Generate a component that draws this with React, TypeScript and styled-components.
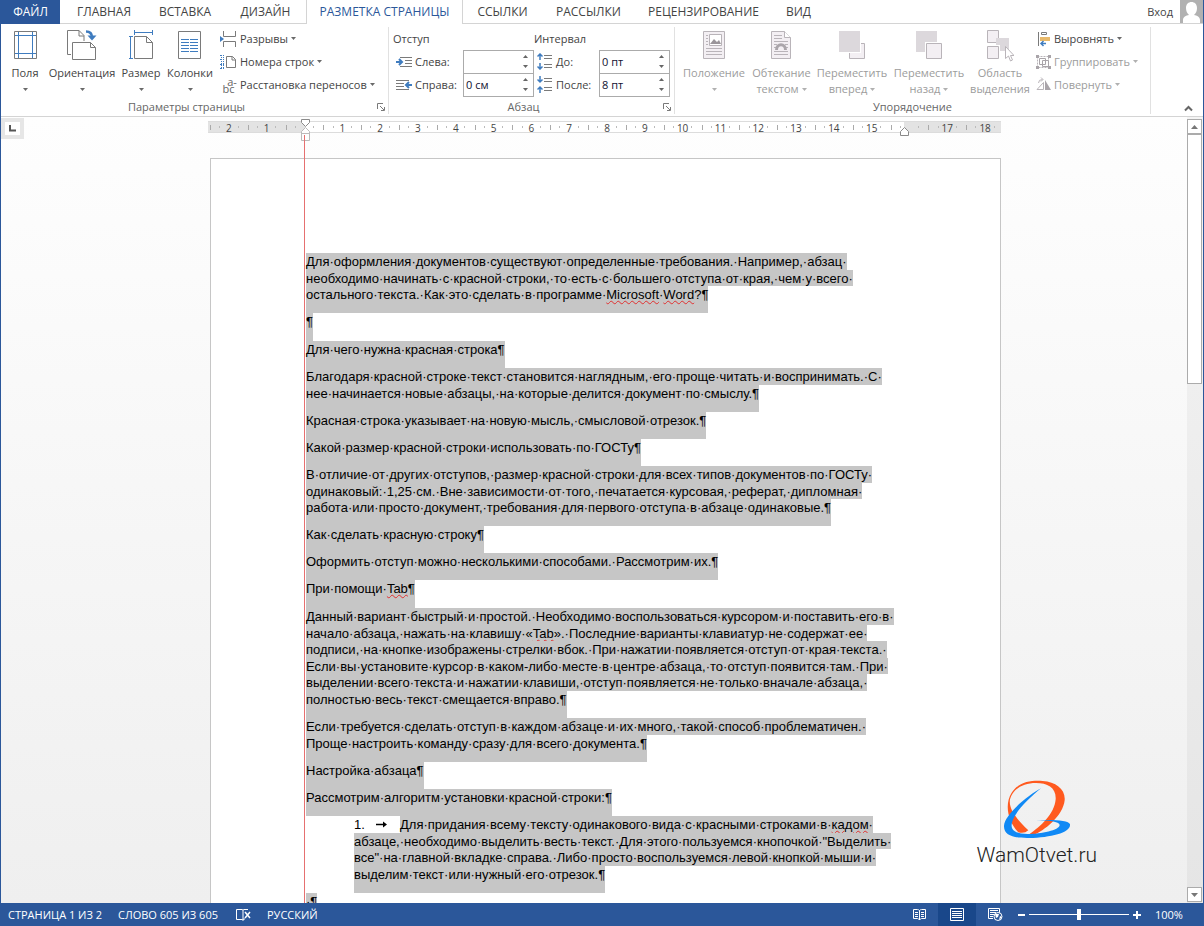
import React, { Fragment, ReactNode } from "react";
import styled, { createGlobalStyle, css } from "styled-components";

const BLUE = "#2b579a";
const UI_FONT = '"Open Sans", "Noto Sans", sans-serif';

const GlobalStyle = createGlobalStyle`
  * { box-sizing: border-box; }
  body { margin: 0; font: 12px/16px ${UI_FONT}; color: #444; background: #fff; }
  button, input { font: inherit; color: inherit; }
  button { border: 0; padding: 0; background: none; }
  svg { display: block; }
`;

/* ---------- window frame ---------- */

const Window = styled.div`
  display: flex;
  flex-direction: column;
  height: 100vh;
  border: solid ${BLUE};
  border-width: 0 1px;
  overflow: hidden;
`;

/* ---------- tab strip ---------- */

const TabStrip = styled.nav`
  display: flex;
  flex: none;
  height: 24px;
  border-bottom: 1px solid #d4d4d4;
`;

const FileTab = styled.button`
  width: 59px;
  height: 24px;
  margin-right: 3px;
  background: ${BLUE};
  color: #fff;
`;

const Tab = styled.button<{ $width: number; $active?: boolean }>`
  width: ${(p) => p.$width}px;
  height: 24px;
  white-space: nowrap;
  ${(p) =>
    p.$active &&
    css`
      border: solid #d4d4d4;
      border-width: 0 1px;
      background: #fff;
      color: ${BLUE};
    `}
`;

const Account = styled.button`
  display: flex;
  gap: 7px;
  align-items: center;
  height: 23px;
  margin-left: auto;
  font-size: 11px;
`;

/* ---------- ribbon ---------- */

const Ribbon = styled.div`
  display: flex;
  flex: none;
  height: 93px;
  border-bottom: 1px solid #d4d4d4;
  font-size: 11px;
`;

const Group = styled.section<{ $width: number }>`
  display: flex;
  flex-direction: column;
  flex: none;
  width: ${(p) => p.$width}px;
  margin: 3px 0 2px;
  border-right: 1px solid #e1e1e1;
`;

const GroupBody = styled.div`
  display: flex;
  flex: 1;
  padding-left: 4px;
`;

const GroupFooter = styled.footer`
  display: flex;
  align-items: center;
  height: 14px;
  color: #666;
`;

const GroupTitle = styled.span`
  flex: 1;
  text-align: center;
`;

const BigButton = styled.button<{ $width: number }>`
  display: flex;
  flex-direction: column;
  align-items: center;
  width: ${(p) => p.$width}px;
  padding-top: 3px;
  white-space: nowrap;
  &:disabled { color: #9c9c9c; }
`;

const BigLabel = styled.span`
  display: flex;
  align-items: center;
  justify-content: center;
  gap: 3px;
  height: 16px;
`;

const IconBox = styled.span`
  display: block;
  height: 35px;
`;

const SmallColumn = styled.div<{ $indent: number }>`
  display: flex;
  flex-direction: column;
  margin-left: ${(p) => p.$indent}px;
`;

const SmallButton = styled.button`
  display: flex;
  align-items: center;
  gap: 3px;
  height: 23px;
  white-space: nowrap;
  &:disabled { color: #9c9c9c; }
`;

const Launcher = styled.button`
  display: grid;
  place-items: center;
  width: 14px;
  height: 12px;
  margin-left: 2px;
`;

const Collapse = styled.button`
  align-self: flex-end;
  margin: 0 10px 4px auto;
`;

const Spacing = styled.div`
  display: grid;
  grid-template-columns: 70px 71px 65px 71px;
  grid-template-rows: repeat(3, 23px);
  align-items: center;
`;

const Heading = styled.span`
  grid-column: span 2;
`;

const FieldLabel = styled.label`
  display: flex;
  align-items: center;
  gap: 3px;
  padding-left: 3px;
  white-space: nowrap;
`;

const Spin = styled.span`
  display: flex;
  height: 24px;
  border: 1px solid #ababab;
  background: #fff;
`;

const SpinInput = styled.input`
  flex: 1;
  min-width: 0;
  padding: 0 2px;
  border: 0;
  outline: 0;
  background: none;
  color: #101030;
`;

const SpinButtons = styled.span`
  display: grid;
  width: 16px;
  padding: 1px 0;
`;

const SpinButton = styled.button`
  display: grid;
  place-items: center;
`;

/* ---------- work area ---------- */

const WorkArea = styled.main`
  display: grid;
  grid-template-columns: 23px 1fr 16px;
  flex: 1;
  min-height: 0;
  background: linear-gradient(#fefefe, #efefef);
`;

const TabSelector = styled.button`
  display: grid;
  place-items: center;
  width: 23px;
  height: 21px;
  margin-top: 1px;
  border: 4px solid #e6e6e6;
  background: #fff;
`;

const Canvas = styled.div`
  position: relative;
  display: flex;
  flex-direction: column;
  align-items: center;
  overflow: hidden;
`;

const RulerWrap = styled.div`
  position: relative;
  flex: none;
  width: 795px;
  height: 41px;
  padding: 4px 2px 0 0;
`;

const RulerBar = styled.div`
  height: 12px;
  border: solid #dcdcdc;
  border-width: 1px 0;
  background: linear-gradient(90deg, #e3e3e3 97px, #fff 97px 696px, #e3e3e3 696px);
`;

const RulerScale = styled.div`
  display: grid;
  grid-template-columns: repeat(21, 1fr);
  margin: 0 -3px 0 2px;
`;

const RulerCell = styled.span`
  height: 10px;
  background:
    linear-gradient(#aaa, #aaa) 0 3px / 1px 5px no-repeat,
    linear-gradient(#bbb, #bbb) 25% 4px / 1px 2px no-repeat,
    linear-gradient(#bbb, #bbb) 75% 4px / 1px 2px no-repeat;
  font-size: 10px;
  line-height: 12px;
  text-align: center;
`;

const MarkerAnchor = styled.span<{ $left: number; $top: number }>`
  position: absolute;
  left: ${(p) => p.$left}px;
  top: ${(p) => p.$top}px;
`;

const Guide = styled.div`
  position: absolute;
  left: 96px;
  top: 18px;
  z-index: 1;
  width: 1px;
  height: 100vh;
  background: #e67070;
`;

const Paper = styled.article`
  flex: none;
  width: 791px;
  min-height: 1100px;
  padding: 94px 90px 0 95px;
  border: 1px solid #c6c6c6;
  background: #fff;
  color: #000;
  font: 13px/17px "Liberation Sans", Arial, sans-serif;
`;

const Line = styled.span`
  display: flex;
  height: 17px;
  white-space: nowrap;
  &:nth-child(even) { height: 16px; }
  &:last-child { height: 27px; }
`;

const Paragraph = styled.p<{ $indent?: number }>`
  margin: 0 0 0 ${(p) => p.$indent ?? 0}px;
  &:nth-child(8n + 2) ${Line}:last-child { height: 28px; }
`;

const Selected = styled.mark`
  background: #c6c6c6;
  color: inherit;
`;

const Misspelled = styled.span`
  text-decoration: underline wavy #e03030 1px;
  text-underline-offset: 1px;
`;

const Bullet = styled.span`
  display: flex;
  gap: 11px;
  width: 46px;
`;

const Watermark = styled.figure`
  position: absolute;
  right: 90px;
  bottom: 35px;
  display: flex;
  flex-direction: column;
  align-items: center;
  gap: 1px;
  margin: 0;
  color: #222;
  font: 300 21px/26px Roboto, sans-serif;
`;

const ScrollBar = styled.div`
  display: flex;
  flex-direction: column;
  padding: 2px 1px 1px 0;
  background: rgba(0, 0, 0, 0.04);
`;

const ScrollButton = styled.button`
  display: grid;
  place-items: center;
  width: 15px;
  height: 15px;
  border: 1px solid #ababab;
  background: #fff;
`;

const Thumb = styled.div`
  height: 250px;
  border: 1px solid #ababab;
  background: #fff;
`;

const Grow = styled.span`
  flex: 1;
`;

/* ---------- status bar ---------- */

const StatusBar = styled.footer`
  display: flex;
  flex: none;
  align-items: center;
  height: 23px;
  padding-left: 7px;
  background: ${BLUE};
  color: #fff;
  font-size: 11px;
  white-space: nowrap;
`;

const StatusItem = styled.button<{ $width: number }>`
  width: ${(p) => p.$width}px;
  text-align: left;
`;

const ViewButton = styled.button<{ $active?: boolean }>`
  display: grid;
  place-items: center;
  width: 38px;
  height: 23px;
  background: ${(p) => (p.$active ? "#19478a" : "none")};
`;

const ZoomStep = styled.button`
  display: grid;
  place-items: center;
  width: 14px;
  height: 23px;
`;

const ZoomSlider = styled.input`
  width: 100px;
  height: 12px;
  margin: 0 1px;
  appearance: none;
  background: linear-gradient(#fff, #fff) 0 5px / 100% 1px no-repeat;
  &::-webkit-slider-thumb {
    appearance: none;
    width: 4px;
    height: 11px;
    background: #fff;
  }
`;

const ZoomValue = styled.button`
  width: 59px;
  padding-left: 11px;
  text-align: left;
`;

/* ---------- icons ---------- */

const GREY = "#7a7a7a";
const INK = "#3f7cbf";
const PALE = "#f3eff3";
const DIM = "#b9b4b9";

const Svg = ({ w, h, children }: { w: number; h: number; children: ReactNode }) => (
  <svg width={w} height={h} viewBox={`0 0 ${w} ${h}`} fill="none" aria-hidden="true">
    {children}
  </svg>
);

const Caret = () => (
  <Svg w={5} h={3}><path d="M0 0h5L2.5 3z" fill="currentColor" opacity="0.8" /></Svg>
);

const MarginsIcon = () => (
  <Svg w={24} h={30}>
    <path d="M1.500 1.500h22v27h-22z" stroke={GREY} />
    <path d="M5.500 2v26M19.500 2v26M2 5.500h21M2 23.500h21" stroke={INK} />
  </Svg>
);

const OrientationIcon = () => (
  <Svg w={30} h={30}>
    <path d="M4 24.500H.5V.5h11.500l5 5V11M12 .5V6h5" stroke={GREY} />
    <path d="M5.500 12.500h18l5 5v12h-23zM23.500 12.500v5h5" stroke={GREY} fill="#fff" />
    <path d="M19 1.500q6 0 6 6" stroke={INK} strokeWidth="2.500" />
    <path d="M20.500 5.500L25 10.500 29.500 5.500z" fill={INK} />
  </Svg>
);

const SizeIcon = () => (
  <Svg w={26} h={30}>
    <path d="M6.500 6.500h12l6 6v16h-18zM18.500 6.500v6h6" stroke={GREY} />
    <path d="M6 2.500h18M6.500 0v5M24.500 0v5M2.500 6v22M1 6.500h4M1 28.500h4" stroke={INK} />
  </Svg>
);

const ColumnsIcon = () => (
  <Svg w={24} h={30}>
    <path d="M.5 1.500h22v27H.5z" stroke={GREY} />
    <path d="M3 9.500h8M3 12.500h8M3 15.500h8M3 18.500h8M3 21.500h8M12 9.500h8M12 12.500h8M12 15.500h8M12 18.500h8M12 21.500h8" stroke={INK} />
  </Svg>
);

const BreaksIcon = () => (
  <Svg w={17} h={16}>
    <path d="M3.500 0v5.500h12V0M3.500 16v-5.500h12V16" stroke={GREY} />
    <path d="M0 5l4 3-4 3z" fill={INK} />
  </Svg>
);

const LineNumbersIcon = () => (
  <Svg w={17} h={16}>
    <path d="M6.500 2.500h6l3 3v8h-9zM12 2.500V6h3.500" stroke={GREY} />
    <path d="M1.500 1v14M3.500 1v14" stroke={INK} strokeDasharray="1 1" />
    <path d="M0 1.500h4M0 5.500h4M0 10.500h4M0 14.500h4" stroke={INK} strokeDasharray="2 1" />
  </Svg>
);

const HyphenIcon = styled.span`
  display: flex;
  flex-direction: column;
  width: 17px;
  color: #666;
  font-size: 11px;
  line-height: 7px;
  &::before { content: "a-"; padding-left: 7px; }
  &::after { content: "bc"; }
`;

const IndentIcon = ({ right }: { right?: boolean }) => (
  <Svg w={16} h={12}>
    {right ? (
      <>
        <path d="M0 1.500h13M0 4.500h8M0 7.500h8M0 10.500h13" stroke={GREY} />
        <path d="M16 6h-5M13 3l-3 3 3 3" stroke={INK} strokeWidth="2" />
      </>
    ) : (
      <>
        <path d="M4 1.500h12M9 4.500h7M9 7.500h7M4 10.500h12" stroke={GREY} />
        <path d="M0 6h5M3 3l3 3-3 3" stroke={INK} strokeWidth="2" />
      </>
    )}
  </Svg>
);

const SpaceIcon = ({ after }: { after?: boolean }) => (
  <Svg w={16} h={17}>
    <path d="M7 2.500h8M7 5.500h8M7 11.500h8M7 14.500h8" stroke={GREY} />
    {after ? (
      <path d="M3 0v6M.5 3.500L3 6l2.500-2.500M3 17v-6M.5 13.500L3 11l2.500 2.500" stroke={INK} strokeWidth="1.500" />
    ) : (
      <path d="M3 7V1M.5 3.500L3 1l2.500 2.500M3 10v6M.5 13.500L3 16l2.500-2.500" stroke={INK} strokeWidth="1.500" />
    )}
  </Svg>
);

const PositionIcon = () => (
  <Svg w={24} h={30}>
    <path d="M1.500 1.500h21v27h-21z" stroke={DIM} fill={PALE} />
    <path d="M7.500 4.500h12v11h-12z" stroke={DIM} fill="#fff" />
    <path d="M8 14l4-5 3 3 2-2 2 4z" fill="#9a959a" />
    <path d="M4 5.500h2M4 8.500h2M4 11.500h2M4 14.500h2M4 18.500h16M4 21.500h16M4 24.500h16" stroke={DIM} />
  </Svg>
);

const WrapIcon = () => (
  <Svg w={24} h={30}>
    <path d="M1.500 1.500h13l6 6v21h-19z" stroke={DIM} fill={PALE} />
    <path d="M14.500 1.500v6h6" stroke={DIM} fill="#fff" />
    <path d="M4 5.500h8M4 8.500h8M4 11.500h14M4 14.500h3M15 14.500h3M4 17.500h2M16 17.500h2M4 21.500h14M4 24.500h14" stroke={DIM} />
    <path d="M6.500 20c0-7 9-7 9 0" stroke="#aaa5aa" strokeWidth="3" />
  </Svg>
);

const ForwardIcon = () => (
  <Svg w={28} h={30}>
    <path d="M11.500 13.500h15v15h-15z" stroke={DIM} fill={PALE} />
    <path d="M0 0h23v23H0z" fill="#fff" />
    <path d="M1 1h21v21H1z" fill="#dcd8dc" />
  </Svg>
);

const BackwardIcon = () => (
  <Svg w={28} h={30}>
    <path d="M1 1h21v21H1z" fill="#dcd8dc" />
    <path d="M10 12h17v17H10z" fill="#fff" />
    <path d="M11.500 13.500h15v15h-15z" stroke={DIM} fill={PALE} />
  </Svg>
);

const SelectionIcon = () => (
  <Svg w={28} h={32}>
    <path d="M1.500.5h11v12h-11zM1.500 16.500h11v12h-11z" stroke={DIM} fill={PALE} />
    <path d="M10 8h13v13H14v-6h-4z" fill="#dcd8dc" />
    <path d="M19.500 16.500v12l3-2.500 2 5 2-1-2-4.500h3.500z" stroke={DIM} fill="#fff" />
  </Svg>
);

const AlignIcon = () => (
  <Svg w={15} h={16}>
    <path d="M2.500 1v14" stroke={GREY} />
    <path d="M5.500 1.500h5v2h-5z" stroke={GREY} />
    <path d="M4 6h10v4H4z" fill="#e8b96a" />
    <path d="M10 12.500H5M7.500 10L5 12.500 7.500 15" stroke={INK} strokeWidth="1.500" />
  </Svg>
);

const GroupIcon = () => (
  <Svg w={15} h={16}>
    <path d="M1.500 2.500h11v11h-11z" stroke={DIM} strokeDasharray="2 1" />
    <path d="M3.500 4.500h6v6h-6zM6.500 6.500h6v6h-6z" stroke="#a9a4a9" />
    <path d="M0 1h3v3H0zM12 1h3v3h-3zM0 12h3v3H0zM12 12h3v3h-3z" fill="#a9a4a9" />
  </Svg>
);

const RotateIcon = () => (
  <Svg w={15} h={16}>
    <path d="M7.500 5.500v7H1z" stroke={DIM} />
    <path d="M9 3v10h6z" fill="#a9a4a9" />
    <path d="M2.500 6q0-3.500 4-3.500M5 .5l2 2-2 2" stroke={DIM} />
  </Svg>
);

const LauncherIcon = () => (
  <Svg w={8} h={8}>
    <path d="M.5 6V.5H6M3 3l4 4M7.500 4v3.500H4" stroke={GREY} />
  </Svg>
);

const AvatarIcon = () => (
  <Svg w={23} h={23}>
    <path d="M0 0h23v23H0z" fill="#b1b1b1" />
    <path d="M3 23v-3c0-3 3-4.500 6-5-2-2-3-4-3-7 0-4 2.500-6 5.500-6S17 4 17 8c0 3-1 5-3 7 3 .5 6 2 6 5v3z" fill="#fff" />
  </Svg>
);

const TabArrowIcon = () => (
  <Svg w={11} h={17}>
    <path d="M0 8.500h8" stroke="#000" strokeWidth="1.500" />
    <path d="M7 5.500l4 3-4 3z" fill="#000" />
  </Svg>
);

const ProofIcon = () => (
  <Svg w={15} h={13}>
    <path d="M7 12.500c0-1-1-1-1-1H.5v-10H6q1 0 1 1v10M7 2.500q0-1 1-1h4M7 12q0-1 1-1h1" stroke="#fff" />
    <path d="M9 4l5 6M14 4l-5 6" stroke="#fff" strokeWidth="1.500" />
  </Svg>
);

const ReadIcon = () => (
  <Svg w={15} h={13}>
    <path d="M7.500 2.500q-1-1-2-1h-4v9h4q1 0 2 1.500 1-1.500 2-1.500h4v-9h-4q-1 0-2 1V12M3 4.500h3M3 6.500h3M3 8.500h3M9 4.500h3M9 6.500h3M9 8.500h3" stroke="#fff" />
  </Svg>
);

const PrintViewIcon = () => (
  <Svg w={14} h={13}>
    <path d="M.5.5h13v12H.5zM2 3.500h10M2 5.500h10M2 7.500h10M2 9.500h10" stroke="#fff" />
  </Svg>
);

const WebViewIcon = () => (
  <Svg w={15} h={13}>
    <path d="M5 10.500H.5V.5h11V5M2 2.500h8M2 4.500h6M2 6.500h4M2 8.500h3" stroke="#fff" />
    <circle cx="10" cy="8.500" r="4" fill={BLUE} stroke="#fff" />
    <path d="M7 6l4 0-1 3-2 1zM12 8l2 1-3 3z" fill="#fff" />
  </Svg>
);

const LogoIcon = () => (
  <svg width="72" height="62" viewBox="180 54 216 186" aria-hidden="true">
    <path fill="#ff5a1f" d="M262 208Q250 219 232 214C200 180 190 130 212 95C235 60 275 58 305 60C345 63 374 85 371 118C366 165 310 210 275 223L262 222C300 195 340 160 344 115C346 80 320 66 285 66C245 66 215 85 207 115C202 145 228 175 262 208Z" />
    <path fill="#1089f5" d="M300 82C265 100 190 160 189 195C188 225 225 232 265 231C330 229 390 215 387 190C384 177 330 175 285 178C320 178 356 182 356 192C355 208 300 219 260 219C225 218 207 210 213 185C220 155 260 115 300 82Z" />
  </svg>
);

/* ---------- content ---------- */

const TABS: [string, number][] = [
  ["ГЛАВНАЯ", 82],
  ["ВСТАВКА", 80],
  ["ДИЗАЙН", 81],
  ["РАЗМЕТКА СТРАНИЦЫ", 157],
  ["ССЫЛКИ", 79],
  ["РАССЫЛКИ", 93],
  ["РЕЦЕНЗИРОВАНИЕ", 137],
  ["ВИД", 53],
];

const RULER = ["2", "1", "", "1", "2", "3", "4", "5", "6", "7", "8", "9", "10", "11", "12", "13", "14", "15", "", "17", "18"];

// Words in braces carry the spelling mark.
const PARAGRAPHS: string[][] = [
  [
    "Для оформления документов существуют определенные требования. Например, абзац ",
    "необходимо начинать с красной строки, то есть с большего отступа от края, чем у всего ",
    "остального текста. Как это сделать в программе {Microsoft} {Word}?¶",
  ],
  ["¶"],
  ["Для чего нужна красная строка¶"],
  [
    "Благодаря красной строке текст становится наглядным, его проще читать и воспринимать. С ",
    "нее начинается новые абзацы, на которые делится документ по смыслу.¶",
  ],
  ["Красная строка указывает на новую мысль, смысловой отрезок.¶"],
  ["Какой размер красной строки использовать по ГОСТу¶"],
  [
    "В отличие от других отступов, размер красной строки для всех типов документов по ГОСТу ",
    "одинаковый: 1,25 см. Вне зависимости от того, печатается курсовая, реферат, дипломная ",
    "работа или просто документ, требования для первого отступа в абзаце одинаковые.¶",
  ],
  ["Как сделать красную строку¶"],
  ["Оформить отступ можно несколькими способами. Рассмотрим их.¶"],
  ["При помощи {Tab}¶"],
  [
    "Данный вариант быстрый и простой. Необходимо воспользоваться курсором и поставить его в ",
    "начало абзаца, нажать на клавишу «{Tab}». Последние варианты клавиатур не содержат ее ",
    "подписи, на кнопке изображены стрелки вбок. При нажатии появляется отступ от края текста. ",
    "Если вы установите курсор в каком-либо месте в центре абзаца, то отступ появится там. При ",
    "выделении всего текста и нажатии клавиши, отступ появляется не только вначале абзаца, ",
    "полностью весь текст смещается вправо.¶",
  ],
  [
    "Если требуется сделать отступ в каждом абзаце и их много, такой способ проблематичен. ",
    "Проще настроить команду сразу для всего документа.¶",
  ],
  ["Настройка абзаца¶"],
  ["Рассмотрим алгоритм установки красной строки:¶"],
];

const STEP = [
  "Для придания всему тексту одинакового вида с красными строками в {кадом} ",
  "абзаце, необходимо выделить весть текст. Для этого пользуемся кнопочкой \"Выделить ",
  "все\" на главной вкладке справа. Либо просто воспользуемся левой кнопкой мыши и ",
  "выделим текст или нужный его отрезок.¶",
];

const withMarks = (text: string) =>
  text
    .replace(/ /g, "·")
    .split(/(\{[^}]+\})/)
    .map((part, i) =>
      part.startsWith("{") ? <Misspelled key={i}>{part.slice(1, -1)}</Misspelled> : <Fragment key={i}>{part}</Fragment>
    );

const TextBlock = ({ lines, indent, lead }: { lines: string[]; indent?: number; lead?: ReactNode }) => (
  <Paragraph $indent={indent}>
    {lines.map((line, i) => (
      <Line key={i}>
        {i === 0 && lead}
        <Selected>{withMarks(line)}</Selected>
      </Line>
    ))}
  </Paragraph>
);

type BigProps = { icon: ReactNode; width: number; label: string; second?: string; caret?: boolean; disabled?: boolean };

const Big = ({ icon, width, label, second, caret = true, disabled }: BigProps) => (
  <BigButton $width={width} disabled={disabled}>
    <IconBox>{icon}</IconBox>
    <BigLabel>{label}</BigLabel>
    <BigLabel>
      {second}
      {caret && <Caret />}
    </BigLabel>
  </BigButton>
);

const Small = ({ icon, label, disabled }: { icon: ReactNode; label: string; disabled?: boolean }) => (
  <SmallButton disabled={disabled}>
    {icon}
    {label}
    <Caret />
  </SmallButton>
);

const SpinField = ({ id, value }: { id: string; value: string }) => (
  <Spin>
    <SpinInput id={id} defaultValue={value} />
    <SpinButtons>
      <SpinButton aria-label="Больше"><Svg w={5} h={3}><path d="M0 3h5L2.500 0z" fill="#666" /></Svg></SpinButton>
      <SpinButton aria-label="Меньше"><Svg w={5} h={3}><path d="M0 0h5L2.500 3z" fill="#666" /></Svg></SpinButton>
    </SpinButtons>
  </Spin>
);

const Footer = ({ title, launcher }: { title: string; launcher?: boolean }) => (
  <GroupFooter>
    <GroupTitle>{title}</GroupTitle>
    {launcher && <Launcher aria-label={title}><LauncherIcon /></Launcher>}
  </GroupFooter>
);

export default function App() {
  return (
    <Window>
      <GlobalStyle />
      <TabStrip>
        <FileTab>ФАЙЛ</FileTab>
        {TABS.map(([name, width]) => (
          <Tab key={name} $width={width} $active={name === "РАЗМЕТКА СТРАНИЦЫ"}>{name}</Tab>
        ))}
        <Account>Вход<AvatarIcon /></Account>
      </TabStrip>

      <Ribbon>
        <Group $width={388}>
          <GroupBody>
            <Big icon={<MarginsIcon />} width={40} label="Поля" />
            <Big icon={<OrientationIcon />} width={74} label="Ориентация" />
            <Big icon={<SizeIcon />} width={44} label="Размер" />
            <Big icon={<ColumnsIcon />} width={54} label="Колонки" />
            <SmallColumn $indent={3}>
              <Small icon={<BreaksIcon />} label="Разрывы" />
              <Small icon={<LineNumbersIcon />} label="Номера строк" />
              <Small icon={<HyphenIcon aria-hidden="true" />} label="Расстановка переносов" />
            </SmallColumn>
          </GroupBody>
          <Footer title="Параметры страницы" launcher />
        </Group>

        <Group $width={286}>
          <GroupBody>
            <Spacing>
              <Heading>Отступ</Heading>
              <Heading>Интервал</Heading>
              <FieldLabel htmlFor="left"><IndentIcon />Слева:</FieldLabel>
              <SpinField id="left" value="" />
              <FieldLabel htmlFor="before"><SpaceIcon />До:</FieldLabel>
              <SpinField id="before" value="0 пт" />
              <FieldLabel htmlFor="right"><IndentIcon right />Справа:</FieldLabel>
              <SpinField id="right" value="0 см" />
              <FieldLabel htmlFor="after"><SpaceIcon after />После:</FieldLabel>
              <SpinField id="after" value="8 пт" />
            </Spacing>
          </GroupBody>
          <Footer title="Абзац" launcher />
        </Group>

        <Group $width={476}>
          <GroupBody>
            <Big icon={<PositionIcon />} width={70} label="Положение" disabled />
            <Big icon={<WrapIcon />} width={65} label="Обтекание" second="текстом" disabled />
            <Big icon={<ForwardIcon />} width={76} label="Переместить" second="вперед" disabled />
            <Big icon={<BackwardIcon />} width={78} label="Переместить" second="назад" disabled />
            <Big icon={<SelectionIcon />} width={64} label="Область" second="выделения" caret={false} disabled />
            <SmallColumn $indent={4}>
              <Small icon={<AlignIcon />} label="Выровнять" />
              <Small icon={<GroupIcon />} label="Группировать" disabled />
              <Small icon={<RotateIcon />} label="Повернуть" disabled />
            </SmallColumn>
          </GroupBody>
          <Footer title="Упорядочение" />
        </Group>
        <Collapse aria-label="Свернуть ленту">
          <Svg w={9} h={7}><path d="M1 5.500l3.500-3.500L8 5.500" stroke="#666" strokeWidth="2" /></Svg>
        </Collapse>
      </Ribbon>

      <WorkArea>
        <TabSelector aria-label="Табуляция">
          <Svg w={7} h={7}><path d="M1 0v5.500h6" stroke="#555" strokeWidth="2" /></Svg>
        </TabSelector>
        <Canvas>
          <RulerWrap>
            <RulerBar>
              <RulerScale>
                {RULER.map((n, i) => <RulerCell key={i}>{n}</RulerCell>)}
              </RulerScale>
            </RulerBar>
            <MarkerAnchor $left={93} $top={2}>
              <Svg w={9} h={22}>
                <path d="M.5.5h8v3l-4 4-4-4z" fill="#fff" stroke="#8a8a8a" />
                <path d="M4.500 8.500l4 4v9h-8v-9zM.5 14.500h8" fill="#fff" stroke="#bbb" />
              </Svg>
            </MarkerAnchor>
            <MarkerAnchor $left={692} $top={10}>
              <Svg w={9} h={9}><path d="M4.500.5l4 4v4h-8v-4z" fill="#fff" stroke="#8a8a8a" /></Svg>
            </MarkerAnchor>
            <Guide />
          </RulerWrap>
          <Paper>
            {PARAGRAPHS.map((lines, i) => <TextBlock key={i} lines={lines} />)}
            <TextBlock lines={STEP} indent={48} lead={<Bullet>1.<TabArrowIcon /></Bullet>} />
            <TextBlock lines={[" ¶"]} />
          </Paper>
          <Watermark>
            <LogoIcon />
            WamOtvet.ru
          </Watermark>
        </Canvas>
        <ScrollBar>
          <ScrollButton aria-label="Вверх"><Svg w={7} h={4}><path d="M0 4h7L3.500 0z" fill="#777" /></Svg></ScrollButton>
          <Thumb />
          <Grow />
          <ScrollButton aria-label="Вниз"><Svg w={7} h={4}><path d="M0 0h7L3.500 4z" fill="#777" /></Svg></ScrollButton>
        </ScrollBar>
      </WorkArea>

      <StatusBar>
        <StatusItem $width={110}>СТРАНИЦА 1 ИЗ 2</StatusItem>
        <StatusItem $width={118}>СЛОВО 605 ИЗ 605</StatusItem>
        <StatusItem $width={31} aria-label="Правописание"><ProofIcon /></StatusItem>
        <StatusItem $width={60}>РУССКИЙ</StatusItem>
        <Grow />
        <ViewButton aria-label="Режим чтения"><ReadIcon /></ViewButton>
        <ViewButton $active aria-label="Разметка страницы"><PrintViewIcon /></ViewButton>
        <ViewButton aria-label="Веб-документ"><WebViewIcon /></ViewButton>
        <ZoomStep aria-label="Уменьшить"><Svg w={7} h={2}><path d="M0 0h7v2H0z" fill="#fff" /></Svg></ZoomStep>
        <ZoomSlider type="range" aria-label="Масштаб" defaultValue={50} />
        <ZoomStep aria-label="Увеличить"><Svg w={8} h={8}><path d="M0 4h8M4 0v8" stroke="#fff" strokeWidth="2" /></Svg></ZoomStep>
        <ZoomValue>100%</ZoomValue>
      </StatusBar>
    </Window>
  );
}
